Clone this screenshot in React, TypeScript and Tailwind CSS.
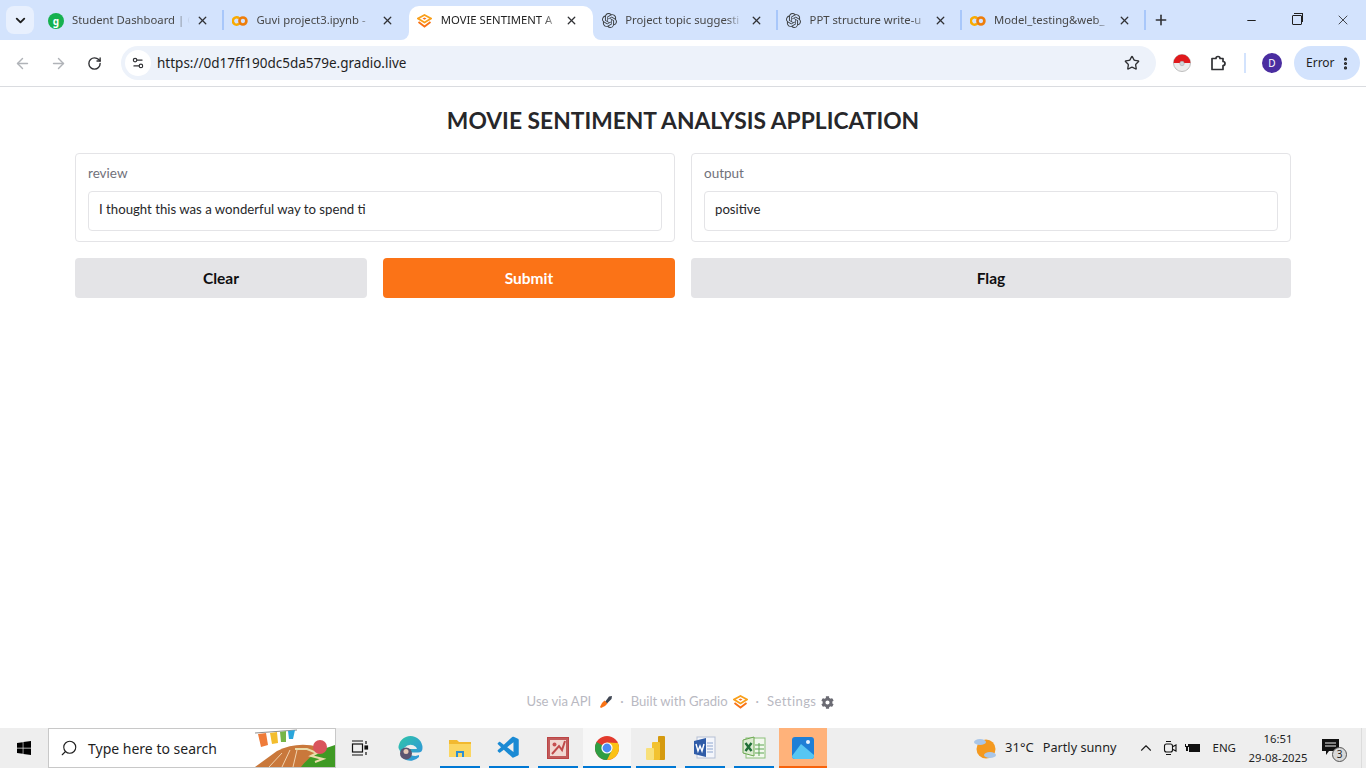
import type { ReactNode } from "react";
import { ArrowLeft, ArrowRight, ChevronDown, ChevronUp, Minus, MoreVertical, Plus, RotateCw, Search, Settings2, Star, X } from "lucide-react";
import { FaCog, FaWindows } from "react-icons/fa";
import { SiOpenai } from "react-icons/si";
import { VscVscode } from "react-icons/vsc";

function ColabIcon() {
  return (
    <svg width="17" height="12" viewBox="0 0 17 12" fill="none">
      <path d="M7.6 3.2 A3.9 3.9 0 1 0 7.6 8.8" stroke="#f9ab00" strokeWidth="2.8" />
      <circle cx="11.6" cy="6" r="3.7" stroke="#ee7d0a" strokeWidth="2.8" />
    </svg>
  );
}

function GradioIcon() {
  return (
    <svg width="15" height="14" viewBox="0 0 15 14" fill="none">
      <path d="M7.5 1 L14 4.5 L7.5 8.5 L1 4.5 Z" stroke="#f9a01b" strokeWidth="1.8" />
      <path d="M5.5 4.6 L7.5 3.6 L9.5 4.6 L7.5 5.8 Z" fill="#f97316" />
      <path d="M1.5 8 L7.5 12.5 L13.5 8" stroke="#f97316" strokeWidth="1.8" />
    </svg>
  );
}

function StudentIcon() {
  return (
    <div className="flex h-4 w-4 items-center justify-center rounded-full bg-[#16b14f] text-[10px] font-bold leading-none text-white">
      g
    </div>
  );
}

function ChromeLogo() {
  return (
    <svg width="24" height="24" viewBox="0 0 24 24">
      <circle cx="12" cy="12" r="12" fill="#e33b2e" />
      <path d="M12 12 L1.6 6 A12 12 0 0 0 12 24 L18 13.5 Z" fill="#2f9e44" />
      <path d="M12 6.5 L22.9 6.9 A12 12 0 0 1 12 24 L17.5 13 Z" fill="#fbc116" />
      <circle cx="12" cy="12" r="5.6" fill="#fff" />
      <circle cx="12" cy="12" r="4.4" fill="#4c8bf5" />
    </svg>
  );
}

function PowerBiLogo() {
  return (
    <svg width="20" height="24" viewBox="0 0 20 24">
      <rect x="12" y="0" width="7" height="24" rx="1" fill="#d59a0f" />
      <rect x="6" y="6" width="8" height="18" rx="1" fill="#f2c230" />
      <rect x="0" y="12" width="8" height="12" rx="1" fill="#f8e07a" />
    </svg>
  );
}

function WordLogo() {
  return (
    <svg width="24" height="24" viewBox="0 0 24 24">
      <rect x="4" y="1" width="18" height="21" fill="#f4f6fb" stroke="#b5bfd4" />
      <path d="M1 5 L13 2 V21 L1 18 Z" fill="#2f5ca8" />
      <path d="M3 8 L5 15 L7 10 L9 15 L11 8" fill="none" stroke="#fff" strokeWidth="1.4" />
      <path d="M14 7h6M14 10h6M14 13h6M14 16h6" stroke="#8ea6cf" />
    </svg>
  );
}

function ExcelLogo() {
  return (
    <svg width="24" height="24" viewBox="0 0 24 24">
      <rect x="4" y="2" width="19" height="20" fill="#f2f8ee" stroke="#8cc07a" />
      <path d="M1 4 L12 1 V20 L1 17 Z" fill="#dcebd2" stroke="#6aa84f" />
      <path d="M3.5 7 L9.5 15 M9.5 7 L3.5 15" stroke="#1f6e36" strokeWidth="2.4" />
      <path d="M13 9h9M13 13h9M13 17h9M17 7v13" stroke="#5ca553" />
    </svg>
  );
}

function AccessLogo() {
  return (
    <svg width="22" height="22" viewBox="0 0 22 22">
      <rect x="0.5" y="0.5" width="21" height="21" fill="#c15a5a" stroke="#b44" />
      <rect x="3" y="3" width="16" height="16" fill="#f1d8d2" />
      <path d="M5 17 L12 9 L15 13 L18 4" fill="none" stroke="#c04a4a" strokeWidth="2" />
      <circle cx="7.5" cy="7.5" r="2" fill="#c65050" />
    </svg>
  );
}

function PhotosLogo() {
  return (
    <svg width="22" height="22" viewBox="0 0 22 22">
      <rect width="22" height="22" rx="3" fill="#1f7fd6" />
      <circle cx="16" cy="5" r="2" fill="#e8f3ff" />
      <path d="M0 19 L9 7 L22 18 V19 Q22 22 19 22 H3 Q0 22 0 19 Z" fill="#57c6f2" />
    </svg>
  );
}

function EdgeLogo() {
  return (
    <svg width="25" height="25" viewBox="0 0 25 25">
      <defs>
        <linearGradient id="edgeTop" x1="0" y1="0" x2="1" y2="1">
          <stop offset="0" stopColor="#2fc6a8" />
          <stop offset="1" stopColor="#2f8fe0" />
        </linearGradient>
      </defs>
      <path d="M0.5 12 A12 12 0 0 1 24.5 12 Q24.5 16.5 20 16.5 H11 Q12 20 17.5 20 L21 19 V21 A12 12 0 0 1 6 23 Z" fill="url(#edgeTop)" />
      <path d="M6 12 Q12 6 18 11 L19 13 H11 Z" fill="#eeeeee" />
      <circle cx="8" cy="17.5" r="6" fill="#5b5570" />
      <circle cx="8" cy="15.5" r="2.5" fill="#e6c9b5" />
    </svg>
  );
}

function FolderLogo() {
  return (
    <svg width="24" height="20" viewBox="0 0 24 20">
      <path d="M1 2 H9 L11 4 H23 V19 H1 Z" fill="#f2b92f" />
      <rect x="1" y="6" width="22" height="13" fill="#fbd661" />
      <path d="M8 19 V13 H16 V19 H14 V15 H10 V19 Z" fill="#2d8fd5" />
    </svg>
  );
}

function ExtensionIcon() {
  return (
    <svg width="18" height="18" viewBox="0 0 18 18" fill="none" stroke="#303134" strokeWidth="1.7" strokeLinejoin="round">
      <path d="M3 4.5 H7 A2 2 0 0 1 11 4.5 H14 V7.5 A2 2 0 0 1 14 11.5 V15.5 H3 Z" />
    </svg>
  );
}

function PokeBall() {
  return (
    <svg width="18" height="18" viewBox="0 0 18 18">
      <circle cx="9" cy="9" r="8.5" fill="#ececec" stroke="#bdbdbd" />
      <path d="M0.6 9 A8.4 8.4 0 0 1 17.4 9 Z" fill="#e0191c" />
      <circle cx="9" cy="9.5" r="2.2" fill="#cfd3d6" stroke="#a9adb1" strokeWidth="0.6" />
    </svg>
  );
}

function SearchArt() {
  return (
    <svg width="80" height="38" viewBox="0 0 80 38" className="shrink-0">
      <path d="M0 38 L22 22 Q42 12 64 18 L80 26 V38 Z" fill="#c9783b" />
      <path d="M46 38 Q58 22 80 16 V38 Z" fill="#3f9a24" />
      <path d="M14 38 L27 24M27 38 L35 21M38 38 L42 21" stroke="#f0d2ae" strokeWidth="1" />
      <path d="M40 20 H52 L62 24 L56 27 L68 30 L60 33" fill="none" stroke="#eadcaa" strokeWidth="2" />
      <circle cx="65" cy="18" r="7" fill="#d9545c" />
      <path d="M0 4 L42 1" stroke="#8d8d8d" />
      <path d="M3 5 L11 4 L13 16 L6 18 Z" fill="#ef7b39" />
      <path d="M15 4 L22 3 L23 14 L17 15 Z" fill="#f3bd2d" />
      <path d="M25 3 L31 2 L31 13 L26 13 Z" fill="#77b548" />
      <path d="M33 2 L40 1 L38 10 L34 10 Z" fill="#2aa6dc" />
    </svg>
  );
}

function RocketIcon() {
  return (
    <svg width="14" height="14" viewBox="0 0 14 14">
      <path d="M6 7 L10 1.5 L13 1 L12.5 4 L7.5 9 Z" fill="#3f4653" />
      <path d="M5.5 5.5 L8.5 8.5 L6 11 L2 13 L1 12 L3 8 Z" fill="#f97316" />
    </svg>
  );
}

const tabs = [
  { icon: <StudentIcon />, title: "Student Dashboard | G", sep: true },
  { icon: <ColabIcon />, title: "Guvi project3.ipynb -" },
  { icon: <GradioIcon />, title: "MOVIE SENTIMENT A", active: true },
  { icon: <SiOpenai size={15} color="#3c4043" />, title: "Project topic suggesti", sep: true },
  { icon: <SiOpenai size={15} color="#3c4043" />, title: "PPT structure write-u", sep: true },
  { icon: <ColabIcon />, title: "Model_testing&web_", sep: true },
];

function BrowserTab({ icon, title, active, sep }: { icon: ReactNode; title: string; active?: boolean; sep?: boolean }) {
  return (
    <div className={"relative flex h-[34px] w-[184.4px] shrink-0 items-center rounded-t-[10px] pb-[5px] pl-[8px] pr-[15px] " + (active ? "bg-white" : "")}>
      <div className="flex w-[16px] shrink-0 justify-center">{icon}</div>
      <div className={"ml-[8px] w-[118px] whitespace-nowrap text-[11.3px] [mask-image:linear-gradient(to_right,black_86%,transparent)] " + (active ? "text-[#1f1f1f]" : "text-[#474747]")}>
        {title}
      </div>
      <X size={13} strokeWidth={2.4} className="ml-auto shrink-0 text-[#303134]" />
      {sep && <div className="absolute right-0 top-[4px] h-[20px] w-[2px] bg-[#a8c7fa]" />}
      {active && (
        <>
          <div className="absolute bottom-0 left-[-8px] h-2 w-2 bg-white">
            <div className="h-2 w-2 rounded-br-[8px] bg-[#d3e3fd]" />
          </div>
          <div className="absolute bottom-0 right-[-8px] h-2 w-2 bg-white">
            <div className="h-2 w-2 rounded-bl-[8px] bg-[#d3e3fd]" />
          </div>
        </>
      )}
    </div>
  );
}

function TaskItem({ children, running, active, hover }: { children: ReactNode; running?: boolean; active?: boolean; hover?: boolean }) {
  return (
    <div
      className={
        "relative flex h-10 w-[48px] shrink-0 items-center justify-center " +
        (active ? "bg-[#ffb27a] " : hover ? "bg-[#f7f7f7] " : "")
      }
    >
      {children}
      {running && (
        <div className={"absolute bottom-0 h-[2px] " + (active ? "inset-x-0 bg-[#f7630c]" : hover ? "inset-x-0 bg-[#0078d4]" : "inset-x-[4px] bg-[#0078d4]")} />
      )}
    </div>
  );
}

export default function App() {
  return (
    <div className="flex h-screen w-full flex-col overflow-hidden bg-white font-['Noto_Sans',sans-serif]">
      {/* tab strip */}
      <div className="flex h-10 shrink-0 items-end bg-[#d3e3fd]">
        <div className="ml-[6px] mr-[6px] flex h-7 w-7 items-center justify-center self-center rounded-lg bg-[#e8f0fe]">
          <ChevronDown size={15} strokeWidth={3} className="text-[#1f1f1f]" />
        </div>
        {tabs.map((t) => (
          <BrowserTab key={t.title} icon={t.icon} title={t.title} active={t.active} sep={t.sep} />
        ))}
        <div className="ml-[7px] flex h-[34px] items-center pb-[6px]">
          <Plus size={16} strokeWidth={2.4} className="text-[#303134]" />
        </div>
        <div className="ml-auto flex h-10 items-center text-[#1f1f1f]">
          <div className="flex w-[46px] justify-center"><Minus size={13} /></div>
          <div className="flex w-[46px] justify-center">
            <div className="relative h-[10px] w-[10px] rounded-[1px] border border-[#1f1f1f] bg-[#d3e3fd] after:absolute after:left-[1px] after:top-[-3px] after:h-[9px] after:w-[9px] after:border-r after:border-t after:border-[#1f1f1f]" />
          </div>
          <div className="flex w-[46px] justify-center"><X size={16} strokeWidth={1.2} /></div>
        </div>
      </div>
      {/* toolbar */}
      <div className="flex h-[47px] shrink-0 items-center border-b border-[#dadce0] bg-white pl-[14px] pr-[6px]">
        <ArrowLeft size={17} className="text-[#b0b3b8]" />
        <ArrowRight size={17} className="ml-[19px] text-[#b0b3b8]" />
        <RotateCw size={15} strokeWidth={2.2} className="ml-[20px] text-[#303134]" />
        <div className="ml-[19px] flex h-[34px] w-[1035px] items-center rounded-full bg-[#edf2fa] pl-[4px] pr-[16px]">
          <div className="flex h-[26px] w-[26px] items-center justify-center rounded-full bg-white">
            <Settings2 size={14} className="text-[#303134]" />
          </div>
          <span className="ml-[6px] text-[13.5px] text-[#1f1f1f]">https://0d17ff190dc5da579e.gradio.live</span>
          <Star size={16} strokeWidth={2} className="ml-auto text-[#303134]" />
        </div>
        <div className="ml-[17px]"><PokeBall /></div>
        <div className="ml-[18px]"><ExtensionIcon /></div>
        <div className="ml-[17px] h-[20px] w-[2px] bg-[#d3e3fd]" />
        <div className="ml-[16px] flex h-5 w-5 items-center justify-center rounded-full bg-[#4a2da0] text-[10px] text-white">D</div>
        <div className="ml-[12px] flex h-[34px] w-[66px] items-center rounded-full bg-[#d3e3fd] pl-[12px] text-[12px] text-[#1f1f1f]">
          Error
          <MoreVertical size={15} strokeWidth={3} className="ml-[3px]" />
        </div>
      </div>
      {/* gradio page */}
      <div className="flex min-h-0 flex-1 flex-col px-[75px] font-['Lato',sans-serif]">
        <h1 className="mt-[17px] text-center text-[22.8px] font-bold leading-[32px] text-[#27272a]">
          MOVIE SENTIMENT ANALYSIS APPLICATION
        </h1>
        <div className="mt-[17px] flex gap-4">
          <div className="flex flex-1 flex-col gap-4">
            <div className="h-[89px] rounded-[4px] border border-[#e4e4e7] px-3 pt-[10px]">
              <div className="text-[13.5px] leading-[18px] text-[#71717a]">review</div>
              <div className="mt-[9px] flex h-10 items-center rounded-[4px] border border-[#e4e4e7] px-[10px] pb-[3px] text-[13.2px] text-[#27272a]">
                I thought this was a wonderful way to spend ti
              </div>
            </div>
            <div className="flex gap-4">
              <button className="h-10 flex-1 rounded-[4px] bg-[#e4e4e7] pt-px text-[15.5px] font-bold text-[#0f0f11]">Clear</button>
              <button className="h-10 flex-1 rounded-[4px] bg-[#fb7317] pt-px text-[15.5px] font-bold text-white">Submit</button>
            </div>
          </div>
          <div className="flex flex-1 flex-col gap-4">
            <div className="h-[89px] rounded-[4px] border border-[#e4e4e7] px-3 pt-[10px]">
              <div className="text-[13.5px] leading-[18px] text-[#71717a]">output</div>
              <div className="mt-[9px] flex h-10 items-center rounded-[4px] border border-[#e4e4e7] px-[10px] pb-[3px] text-[13.2px] text-[#27272a]">
                positive
              </div>
            </div>
            <button className="h-10 rounded-[4px] bg-[#e4e4e7] pt-px text-[15.5px] font-bold text-[#0f0f11]">Flag</button>
          </div>
        </div>
        <div className="mb-[16px] mt-auto flex items-center justify-center pr-[5px] text-[13.1px] text-[#b9b9c2]">
          <span>Use via API</span>
          <span className="ml-[8px]"><RocketIcon /></span>
          <span className="mx-[7px]">·</span>
          <span>Built with Gradio</span>
          <span className="ml-[5px]"><GradioIcon /></span>
          <span className="mx-[8px]">·</span>
          <span className="tracking-[0.4px]">Settings</span>
          <FaCog size={13} className="ml-[5px] text-[#6b6b73]" />
        </div>
      </div>
      {/* windows taskbar */}
      <div className="flex h-10 shrink-0 items-center bg-[#eeeeee] font-['Noto_Sans',sans-serif]">
        <div className="flex w-[48px] justify-center">
          <FaWindows size={16} className="text-black" />
        </div>
        <div className="flex h-10 w-[288px] items-center overflow-hidden border border-[#c8c8c8] bg-white pl-[11px]">
          <Search size={18} strokeWidth={1.5} className="-scale-x-100 text-[#1f1f1f]" />
          <span className="ml-[10px] text-[14px] text-[#1f1f1f]">Type here to search</span>
          <div className="ml-auto"><SearchArt /></div>
        </div>
        <div className="flex items-center gap-px">
          <TaskItem>
            <svg width="18" height="16" viewBox="0 0 18 16" fill="none" stroke="#111" strokeWidth="1.2">
              <path d="M1 1h11M1 15h11" />
              <rect x="1.5" y="4" width="10" height="8" />
              <path d="M15 1v3M15 12v3" />
              <rect x="14" y="6" width="2.5" height="3" fill="#111" />
            </svg>
          </TaskItem>
          <div className="flex w-[50px] justify-center"><TaskItem><EdgeLogo /></TaskItem></div>
          <TaskItem running><FolderLogo /></TaskItem>
          <TaskItem running><VscVscode size={26} color="#1a8ad4" /></TaskItem>
          <TaskItem running><AccessLogo /></TaskItem>
          <TaskItem running hover><ChromeLogo /></TaskItem>
          <TaskItem running><PowerBiLogo /></TaskItem>
          <TaskItem running><WordLogo /></TaskItem>
          <TaskItem running><ExcelLogo /></TaskItem>
          <TaskItem running active><PhotosLogo /></TaskItem>
        </div>
        <div className="ml-auto flex h-10 items-center text-[#1f1f1f]">
          <svg width="26" height="24" viewBox="0 0 26 24">
            <circle cx="14" cy="13" r="9.5" fill="#f4991f" />
            <ellipse cx="8" cy="6" rx="6" ry="3" fill="#a9c6e8" />
            <ellipse cx="18" cy="19" rx="6" ry="3" fill="#a9c6e8" />
          </svg>
          <span className="ml-[7px] text-[13px]">31°C</span>
          <span className="ml-[9px] text-[12.7px]">Partly sunny</span>
          <ChevronUp size={18} strokeWidth={1.5} className="ml-[21px]" />
          <svg width="14" height="16" viewBox="0 0 14 16" fill="none" stroke="#111" strokeWidth="1.1" className="ml-[8px]">
            <rect x="1.5" y="4" width="8" height="8" rx="2" />
            <path d="M10 6.5 L13 5 V11 L10 9.5M3 1.5 H8M3 14.5 H8" />
          </svg>
          <svg width="16" height="12" viewBox="0 0 16 12" className="ml-[8px]">
            <rect x="4" y="2" width="11" height="8" fill="#111" />
            <path d="M0 2h1v2h2V2h1v3H3v4H1V5H0z" fill="#111" />
          </svg>
          <span className="ml-[11px] text-[11.5px]">ENG</span>
          <div className="ml-[13px] flex w-[58px] flex-col items-center text-[11.3px] leading-[19px]">
            <span>16:51</span>
            <span className="whitespace-nowrap">29-08-2025</span>
          </div>
          <div className="relative ml-[15px] mr-[17px] h-[22px] w-[22px]">
            <svg width="18" height="18" viewBox="0 0 18 18" className="mt-[1px]">
              <path d="M0 1h17v12H7l-3 4v-4H0z" fill="#111" />
              <path d="M3 5h11M3 8h11" stroke="#eee" />
            </svg>
            <div className="absolute bottom-[-3px] right-[-3px] flex h-[15px] w-[15px] items-center justify-center rounded-full border border-[#555] bg-[#d8d8d8] text-[10px]">3</div>
          </div>
          <div className="mr-[4px] h-10 w-px bg-[#dcdcdc]" />
        </div>
      </div>
    </div>
  );
}
